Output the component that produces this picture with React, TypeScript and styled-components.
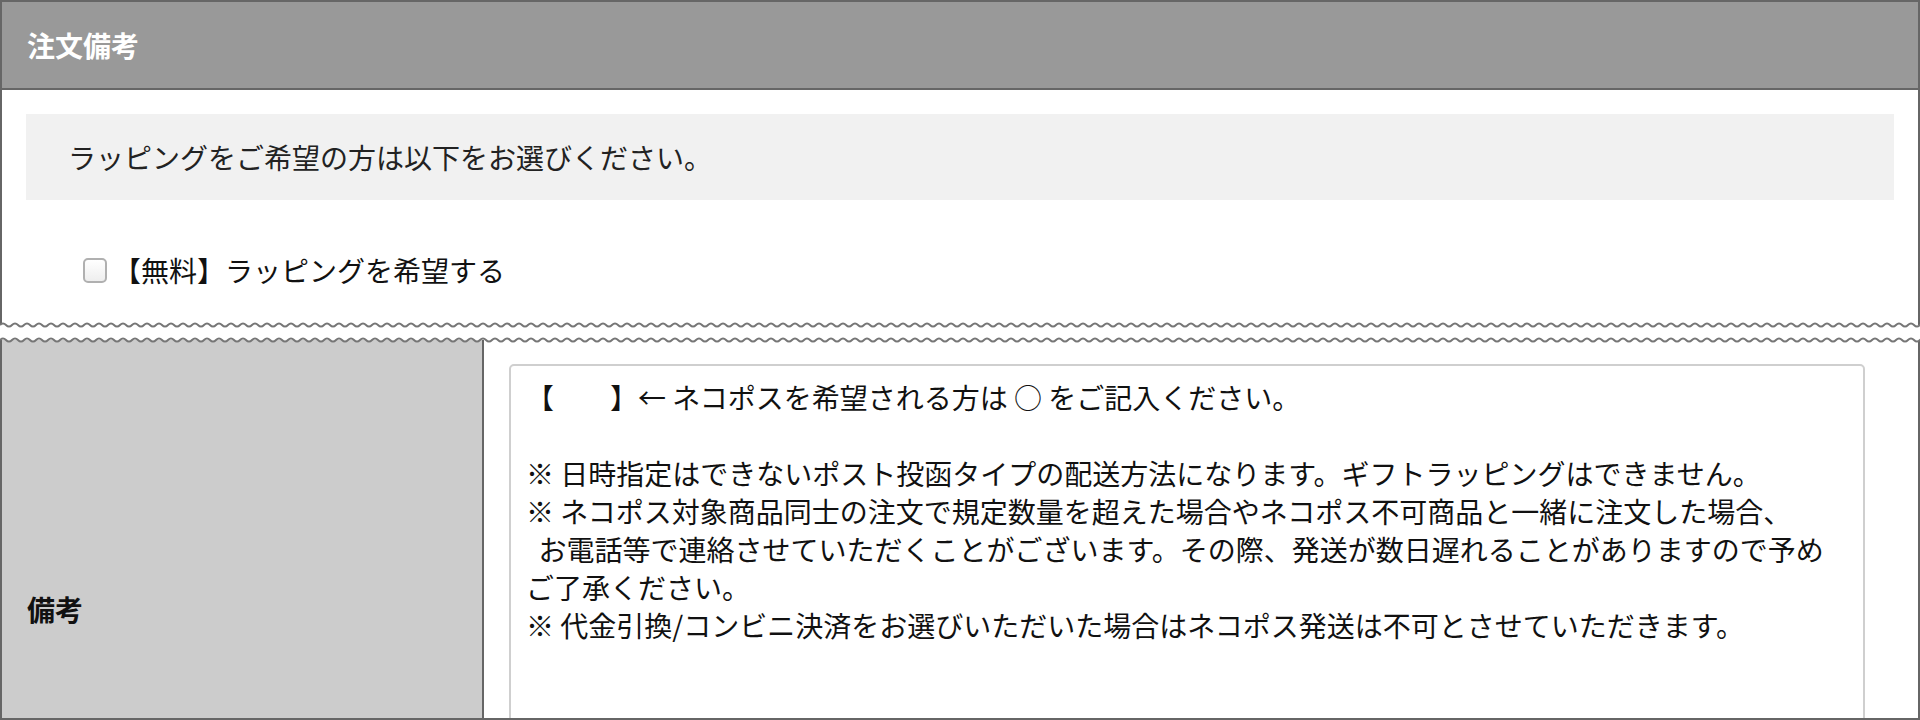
import React from 'react'
import styled, { createGlobalStyle } from 'styled-components'

const GlobalStyle = createGlobalStyle`
  html, body {
    margin: 0;
    padding: 0;
    background: #fff;
  }
  body {
    font-family: 'Noto Sans CJK JP', 'Noto Sans', sans-serif;
    color: #111;
  }
  * { box-sizing: border-box; }
`

// sine-like line used for the torn edges between the two panels
const wavePath = (width: number, mid: number, amp: number, half: number) => {
    let d = `M0 ${mid} Q${half / 2} ${mid - amp * 2} ${half} ${mid}`
    for (let x = half * 2; x <= width + half * 2; x += half) d += ` T${x} ${mid}`
    return d
}

const EDGE_W = 1940
const EDGE_H = 8

const Page = styled.div`
  width: 1920px;
  height: 720px;
  overflow: hidden;
`

const TopPanel = styled.section`
  position: relative;
  border: 2px solid #666;
  border-bottom: none;
`

const Header = styled.div`
  height: 88px;
  display: flex;
  align-items: center;
  padding-left: 25px;
  background: #999;
  border-bottom: 2px solid #666;
  color: #fff;
  font-size: 28px;
  font-weight: 700;
`

const Body = styled.div`
  padding: 24px 24px 35px;
`

const Notice = styled.p`
  margin: 0;
  height: 86px;
  display: flex;
  align-items: center;
  padding-left: 42px;
  background: #f1f1f1;
  font-size: 28px;
  color: #222;
`

const OptionRow = styled.label`
  margin-top: 50px;
  height: 40px;
  display: flex;
  align-items: center;
  gap: 6px;
  padding-left: 57px;
  font-size: 28px;
  line-height: 40px;
  color: #111;
`

const Check = styled.input`
  appearance: none;
  margin: 0;
  width: 24px;
  height: 25px;
  border: 2px solid #b0b0b0;
  border-radius: 5px;
  background: linear-gradient(#ffffff, #eeeeee);
`

const Edge = styled.svg<{ $side: 'top' | 'bottom' }>`
  position: absolute;
  left: -2px;
  ${(p) => (p.$side === 'bottom' ? 'bottom: -4px;' : 'top: -4px;')}
  width: calc(100% + 4px);
  height: ${EDGE_H}px;
  display: block;
  z-index: 1;
`

function TornEdge(props: { side: 'top' | 'bottom' }) {
    const line = wavePath(EDGE_W, EDGE_H / 2, 1.5, 6)
    // white fill hides the panel border on the torn side of the line
    const cover = props.side === 'bottom'
        ? `${line} V${EDGE_H} H0 Z`
        : `${line} V0 H0 Z`
    return (
        <Edge $side={props.side} aria-hidden>
            <path d={cover} fill="#fff" />
            <path d={line} fill="none" stroke="#767676" strokeWidth={2} />
        </Edge>
    )
}

const BottomPanel = styled.section`
  position: relative;
  margin-top: 15px;
  height: 380px;
  border: 2px solid #666;
  border-top: none;
`

const Clip = styled.div`
  height: 100%;
  overflow: hidden;
`

const Row = styled.div`
  display: flex;
  height: 538px;
`

const LabelCell = styled.div`
  width: 482px;
  flex-shrink: 0;
  display: flex;
  align-items: center;
  padding-left: 25px;
  background: #ccc;
  border-right: 2px solid #666;
  font-size: 28px;
  font-weight: 700;
  color: #111;
`

const FieldCell = styled.div`
  flex: 1;
  padding: 24px 0 24px 25px;
`

const Memo = styled.textarea`
  display: block;
  width: 1356px;
  height: 490px;
  margin: 0;
  padding: 12px 15px;
  border: 2px solid #cfcfcf;
  border-radius: 5px;
  background: #fff;
  font-family: 'Noto Sans CJK JP', 'Noto Sans', sans-serif;
  font-size: 28px;
  line-height: 38px;
  color: #111;
  resize: none;
  overflow: hidden;
  outline: none;
`

const memoText = [
    '【　　】← ネコポスを希望される方は ○ をご記入ください。',
    '',
    '※ 日時指定はできないポスト投函タイプの配送方法になります。ギフトラッピングはできません。',
    '※ ネコポス対象商品同士の注文で規定数量を超えた場合やネコポス不可商品と一緒に注文した場合、',
    '  お電話等で連絡させていただくことがございます。その際、発送が数日遅れることがありますので予め',
    'ご了承ください。',
    '※ 代金引換/コンビニ決済をお選びいただいた場合はネコポス発送は不可とさせていただきます。',
].join('\n')

export default function App() {
    return (
        <Page>
            <GlobalStyle />
            <TopPanel>
                <Header>注文備考</Header>
                <Body>
                    <Notice>ラッピングをご希望の方は以下をお選びください。</Notice>
                    <OptionRow>
                        <Check type="checkbox" />
                        <span>【無料】ラッピングを希望する</span>
                    </OptionRow>
                </Body>
                <TornEdge side="bottom" />
            </TopPanel>

            <BottomPanel>
                <TornEdge side="top" />
                <Clip>
                    <Row>
                        <LabelCell>備考</LabelCell>
                        <FieldCell>
                            <Memo wrap="off" defaultValue={memoText} />
                        </FieldCell>
                    </Row>
                </Clip>
            </BottomPanel>
        </Page>
    )
}
